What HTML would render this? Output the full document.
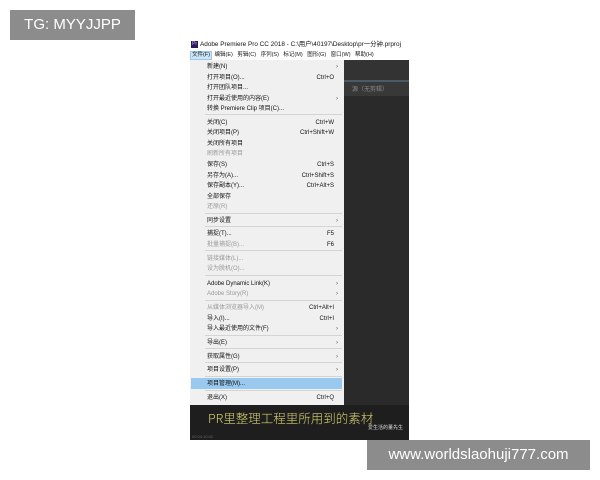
<!DOCTYPE html>
<html><head><meta charset="utf-8"><style>
body{margin:0;width:600px;height:480px;background:#fff;position:relative;overflow:hidden;font-family:"Liberation Sans","Noto Sans CJK SC",sans-serif}
.a{position:absolute}
.m{position:absolute;left:207px;font-size:6px;line-height:8px;color:#111;white-space:nowrap;margin-top:1px}
.g{color:#9a9a9a}
.s{position:absolute;right:266px;font-size:6px;line-height:8px;color:#111;margin-top:1px}
.r{position:absolute;left:336px;font-size:6px;line-height:8px;color:#555;margin-top:1px}
.sep{position:absolute;left:205px;width:137px;height:1px;background:#d4d4d4}
</style></head><body>
<div class="a" style="left:10px;top:10px;width:125px;height:30px;background:#8c8c8c;color:#fff;font-size:15px;line-height:30px;text-align:center">TG: MYYJJPP</div>
<div class="a" style="left:190px;top:40px;width:219px;height:400px;background:#2a2a2a"></div>
<div class="a" style="left:190px;top:40px;width:219px;height:20px;background:#fff"></div>
<div class="a" style="left:191px;top:41px;width:7px;height:7px;background:#2a1a5a;color:#d0a0ff;font-size:5px;line-height:7px;text-align:center">Pr</div>
<div class="a" style="left:200px;top:40px;font-size:6.4px;line-height:10px;color:#111;white-space:nowrap">Adobe Premiere Pro CC 2018 - C:\用户\40197\Desktop\pr一分钟.prproj</div>
<div class="a" style="left:190px;top:51px;width:22px;height:9px;background:#cce4f7;border:1px solid #99c9ef;box-sizing:border-box"></div>
<div class="a" style="left:192px;top:51px;font-size:5.5px;line-height:9px;color:#111;white-space:nowrap;word-spacing:3px">文件(F) 编辑(E) 剪辑(C) 序列(S) 标记(M) 图形(G) 窗口(W) 帮助(H)</div>
<div class="a" style="left:344px;top:60px;width:65px;height:20px;background:#333"></div>
<div class="a" style="left:344px;top:80px;width:65px;height:2px;background:#4a5a66"></div>
<div class="a" style="left:344px;top:82px;width:65px;height:14px;background:#383838"></div>
<div class="a" style="left:352px;top:84px;font-size:6px;color:#888">源（无剪辑）</div>
<div class="a" style="left:190px;top:60px;width:154px;height:345px;background:#f0f0f0"></div>
<div class="a" style="left:191px;top:378px;width:151px;height:11px;background:#99c9ef"></div>
<div class="sep" style="top:114px"></div><div class="sep" style="top:213px"></div><div class="sep" style="top:226px"></div><div class="sep" style="top:250px"></div><div class="sep" style="top:275px"></div><div class="sep" style="top:300px"></div><div class="sep" style="top:335px"></div><div class="sep" style="top:348px"></div><div class="sep" style="top:362px"></div><div class="sep" style="top:376px"></div><div class="sep" style="top:390px"></div>
<div class="m" style="top:62px">新建(N)</div><div class="r" style="top:62px">›</div>
<div class="m" style="top:73px">打开项目(O)...</div><div class="s" style="top:73px">Ctrl+O</div>
<div class="m" style="top:83px">打开团队项目...</div>
<div class="m" style="top:94px">打开最近使用的内容(E)</div><div class="r" style="top:94px">›</div>
<div class="m" style="top:104px">转换 Premiere Clip 项目(C)...</div>
<div class="m" style="top:118px">关闭(C)</div><div class="s" style="top:118px">Ctrl+W</div>
<div class="m" style="top:128px">关闭项目(P)</div><div class="s" style="top:128px">Ctrl+Shift+W</div>
<div class="m" style="top:139px">关闭所有项目</div>
<div class="m g" style="top:149px">刷新所有项目</div>
<div class="m" style="top:160px">保存(S)</div><div class="s" style="top:160px">Ctrl+S</div>
<div class="m" style="top:171px">另存为(A)...</div><div class="s" style="top:171px">Ctrl+Shift+S</div>
<div class="m" style="top:181px">保存副本(Y)...</div><div class="s" style="top:181px">Ctrl+Alt+S</div>
<div class="m" style="top:192px">全部保存</div>
<div class="m g" style="top:202px">还原(R)</div>
<div class="m" style="top:216px">同步设置</div><div class="r" style="top:216px">›</div>
<div class="m" style="top:229px">捕捉(T)...</div><div class="s" style="top:229px">F5</div>
<div class="m g" style="top:240px">批量捕捉(B)...</div><div class="s g" style="top:240px">F6</div>
<div class="m g" style="top:254px">链接媒体(L)...</div>
<div class="m g" style="top:264px">设为脱机(O)...</div>
<div class="m" style="top:279px">Adobe Dynamic Link(K)</div><div class="r" style="top:279px">›</div>
<div class="m g" style="top:289px">Adobe Story(R)</div><div class="r g" style="top:289px">›</div>
<div class="m g" style="top:303px">从媒体浏览器导入(M)</div><div class="s g" style="top:303px">Ctrl+Alt+I</div>
<div class="m" style="top:314px">导入(I)...</div><div class="s" style="top:314px">Ctrl+I</div>
<div class="m" style="top:324px">导入最近使用的文件(F)</div><div class="r" style="top:324px">›</div>
<div class="m" style="top:338px">导出(E)</div><div class="r" style="top:338px">›</div>
<div class="m" style="top:352px">获取属性(G)</div><div class="r" style="top:352px">›</div>
<div class="m" style="top:365px">项目设置(P)</div><div class="r" style="top:365px">›</div>
<div class="m" style="top:379px">项目管理(M)...</div>
<div class="m" style="top:393px">退出(X)</div><div class="s" style="top:393px">Ctrl+Q</div>
<div class="a" style="left:190px;top:405px;width:219px;height:35px;background:#1e1e1e"></div>
<div class="a" style="left:208px;top:410px;font-size:12.5px;line-height:16px;color:#d8d070;white-space:nowrap;font-family:'Noto Sans CJK SC',sans-serif;font-weight:300">PR里整理工程里所用到的素材</div>
<div class="a" style="left:368px;top:424px;font-size:5px;color:#ddd;white-space:nowrap">爱生活的董先生</div>
<div class="a" style="left:192px;top:434px;font-size:4px;color:#666">00:04:10:02</div>
<div class="a" style="left:367px;top:440px;width:223px;height:30px;background:#8c8c8c;color:#fff;font-size:15px;line-height:30px;text-align:center">www.worldslaohuji777.com</div>
</body></html>
